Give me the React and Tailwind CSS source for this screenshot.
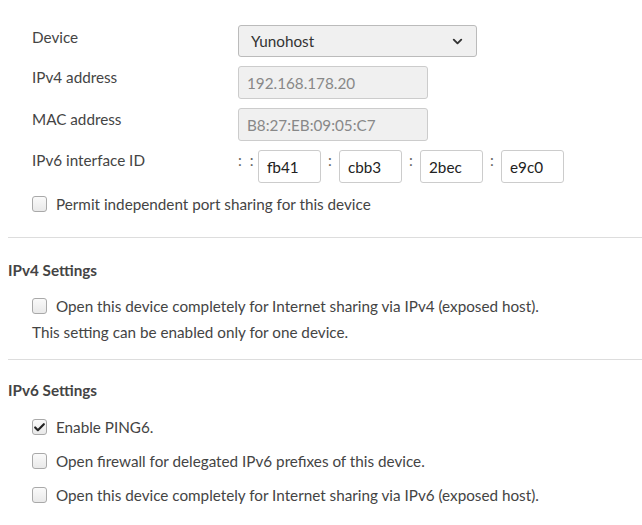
import { Check, ChevronDown } from "lucide-react";

function Checkbox({ checked }) {
    return (
        <span className="flex h-[16px] w-[15px] shrink-0 items-center justify-center rounded-[3px] border border-[#a9a9a9] bg-gradient-to-b from-[#fafafa] to-[#e9e9e9]">
            {checked && <Check className="h-[13px] w-[13px] text-[#222]" strokeWidth={4} />}
        </span>
    );
}

function CheckRow({ checked, children, className = "" }) {
    return (
        <label className={`flex items-center gap-[9px] pl-[32px] ${className}`}>
            <Checkbox checked={checked} />
            <span>{children}</span>
        </label>
    );
}

function Row({ label, pad, children }) {
    return (
        <div className="flex items-start">
            <div className={`w-[238px] pl-[32px] ${pad}`}>{label}</div>
            {children}
        </div>
    );
}

const ipv6Parts = ["fb41", "cbb3", "2bec", "e9c0"];

export default function App() {
    return (
        <div className="h-[525px] w-[642px] overflow-hidden bg-white text-[15.25px] leading-[20px] text-[#444] font-['Lato','Liberation_Sans',sans-serif]">
            <div className="flex flex-col gap-[9px] pt-[25px]">
                <Row label="Device" pad="pt-[2px]">
                    <div className="flex h-[32px] w-[239px] items-center justify-between rounded-[3px] border border-[#bbb] bg-[#f0f0f0] pl-[12px] pr-[11px] text-[#333]">
                        <span>Yunohost</span>
                        <ChevronDown className="h-[15px] w-[15px] text-[#333]" strokeWidth={3} />
                    </div>
                </Row>
                <Row label="IPv4 address" pad="pt-[1px]">
                    <div className="flex h-[33px] w-[190px] items-center rounded-[3px] border border-[#ccc] bg-[#f0f0f0] px-[8px] text-[#888]">
                        192.168.178.20
                    </div>
                </Row>
                <Row label="MAC address" pad="pt-[1px]">
                    <div className="flex h-[33px] w-[190px] items-center rounded-[3px] border border-[#ccc] bg-[#f0f0f0] px-[8px] text-[#888]">
                        B8:27:EB:09:05:C7
                    </div>
                </Row>
                <Row label="IPv6 interface ID" pad="pt-0">
                    <span className="w-[20px] text-[#666] tracking-[2px]">: :</span>
                    {ipv6Parts.map((part, i) => (
                        <div key={part} className="flex items-start">
                            {i > 0 && <span className="w-[18px] text-center text-[#666]">:</span>}
                            <div className="flex h-[33px] w-[63px] items-center rounded-[3px] border border-[#ccc] bg-white px-[8px] text-[#222]">
                                {part}
                            </div>
                        </div>
                    ))}
                </Row>
            </div>

            <CheckRow className="mt-[11px]">Permit independent port sharing for this device</CheckRow>

            <div className="ml-[8px] mt-[23px] border-t border-[#ddd]" />

            <h2 className="pl-[8px] pt-[22px] font-bold text-[#444]">IPv4 Settings</h2>
            <CheckRow className="mt-[16px]">Open this device completely for Internet sharing via IPv4 (exposed host).</CheckRow>
            <p className="pl-[32px] pt-[6px]">This setting can be enabled only for one device.</p>

            <div className="ml-[8px] mt-[17px] border-t border-[#ddd]" />

            <h2 className="pl-[8px] pt-[20px] font-bold text-[#444]">IPv6 Settings</h2>
            <div className="mt-[17px] flex flex-col gap-[14px]">
                <CheckRow checked>Enable PING6.</CheckRow>
                <CheckRow>Open firewall for delegated IPv6 prefixes of this device.</CheckRow>
                <CheckRow>Open this device completely for Internet sharing via IPv6 (exposed host).</CheckRow>
            </div>
        </div>
    );
}
